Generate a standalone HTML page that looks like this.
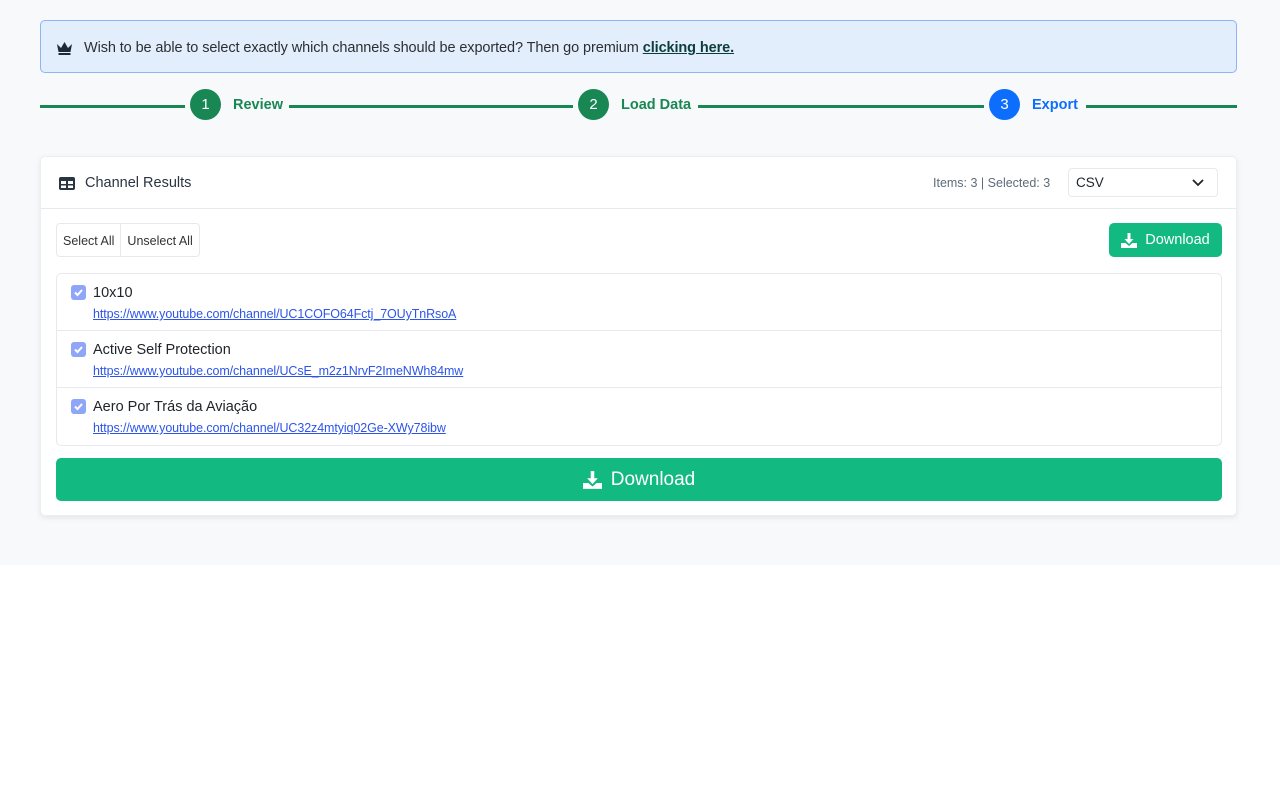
<!DOCTYPE html>
<html><head><meta charset="utf-8"><style>
*{box-sizing:border-box;margin:0;padding:0}
body{width:1280px;height:800px;background:#fff;font-family:"Liberation Sans",sans-serif;color:#212529;font-size:14px}
.bg{position:absolute;left:0;top:0;width:1280px;height:565px;background:#f8f9fb}
.alert{position:absolute;left:40px;top:20px;width:1197px;height:53px;background:#e3eefc;border:1px solid #8db4f6;border-radius:5px;display:flex;align-items:center;padding-left:15px;padding-top:3px;font-size:14.5px;color:#2b2f33;letter-spacing:-0.1px}
.alert a{color:#0b3d3a;font-weight:bold;text-decoration:underline;margin-left:4px}
.line{position:absolute;top:105px;height:3px;background:#198754}
.circ{position:absolute;top:89px;width:31px;height:31px;border-radius:50%;background:#198754;color:#fff;font-size:15px;display:flex;align-items:center;justify-content:center}
.lbl{position:absolute;top:97px;font-weight:bold;font-size:14.5px;color:#198754}
.card{position:absolute;left:40px;top:156px;width:1197px;height:360px;background:#fff;border:1px solid #eceef1;border-radius:5px;box-shadow:0 2px 6px rgba(0,0,0,.08)}
.hdr{height:52px;border-bottom:1px solid #e6e9ee;position:relative}
.btn{position:absolute;background:#12b981;color:#fff;border-radius:5px;display:flex;align-items:center;justify-content:center}
.list{position:absolute;left:15px;top:116px;width:1166px;border:1px solid #e6e9ee;border-radius:5px}
.row{height:57px;border-bottom:1px solid #e6e9ee;position:relative}
.row:last-child{border-bottom:none}
.cb{position:absolute;left:14px;top:11px;width:15px;height:15px;border-radius:3px;background:#8fa6f8}
.nm{position:absolute;left:36px;top:11px;font-size:14.5px}
.url{position:absolute;left:36px;top:33px;font-size:12.5px;color:#2d55e8;text-decoration:underline;letter-spacing:-0.1px}
</style></head><body>
<div class="bg"></div>
<div class="alert"><svg width="17" height="14" viewBox="0 0 17 14" style="margin-right:11px"><path d="M1 3l4 4 3.5-6 3.5 6 4-4-1.5 8h-12z M2.5 12h12v2h-12z" fill="#1e2a3a"/></svg>Wish to be able to select exactly which channels should be exported? Then go premium <a>clicking here.</a></div>
<div class="line" style="left:40px;width:145px"></div>
<div class="circ" style="left:190px">1</div><div class="lbl" style="left:233px">Review</div>
<div class="line" style="left:289px;width:284px"></div>
<div class="circ" style="left:578px">2</div><div class="lbl" style="left:621px">Load Data</div>
<div class="line" style="left:698px;width:286px"></div>
<div class="circ" style="left:989px;background:#0d6efd">3</div><div class="lbl" style="left:1032px;color:#0d6efd">Export</div>
<div class="line" style="left:1086px;width:151px"></div>
<div class="card">
<div class="hdr">
<svg width="16" height="13" viewBox="0 0 16 13" style="position:absolute;left:18px;top:20px"><rect x="0" y="0" width="16" height="13" rx="2" fill="#2b3441"/><rect x="2" y="4" width="5" height="3" fill="#fff"/><rect x="9" y="4" width="5" height="3" fill="#fff"/><rect x="2" y="8.5" width="5" height="2.5" fill="#fff"/><rect x="9" y="8.5" width="5" height="2.5" fill="#fff"/></svg>
<div style="position:absolute;left:44px;top:18px;font-size:14.5px;color:#2b3441">Channel Results</div>
<div style="position:absolute;left:892px;top:19px;font-size:12.5px;color:#5f6b7a">Items: 3 | Selected: 3</div>
<div style="position:absolute;left:1027px;top:11px;width:150px;height:29px;border:1px solid #e6e9ee;border-radius:4px;font-size:13.5px;padding:6px 0 0 7px">CSV<svg width="12" height="8" viewBox="0 0 12 8" style="position:absolute;right:13px;top:10px"><path d="M1 1l5 5 5-5" stroke="#222" stroke-width="1.8" fill="none"/></svg></div>
</div>
<div style="position:absolute;left:15px;top:66px;height:34px;border:1px solid #e6e9ee;border-radius:4px;display:flex;font-size:12.5px;color:#333"><div style="padding:10px 6px 0;border-right:1px solid #e6e9ee">Select All</div><div style="padding:10px 6px 0">Unselect All</div></div>
<div class="btn" style="left:1068px;top:66px;width:113px;height:34px;font-size:14.5px"><svg width="16" height="15" viewBox="0 0 16 15" style="margin-right:8px"><path d="M6.5 0h3v6h3l-4.5 5-4.5-5h3z M0 10h4.5l3.5 3 3.5-3h4.5v5h-16z" fill="#fff"/></svg>Download</div>
<div class="list">
<div class="row"><div class="cb"><svg width="15" height="15" viewBox="0 0 15 15"><path d="M4 7.5l2.5 2.5 4.5-5" stroke="#fff" stroke-width="2" fill="none"/></svg></div><div class="nm">10x10</div><div class="url">https://www.youtube.com/channel/UC1COFO64Fctj_7OUyTnRsoA</div></div>
<div class="row"><div class="cb"><svg width="15" height="15" viewBox="0 0 15 15"><path d="M4 7.5l2.5 2.5 4.5-5" stroke="#fff" stroke-width="2" fill="none"/></svg></div><div class="nm">Active Self Protection</div><div class="url">https://www.youtube.com/channel/UCsE_m2z1NrvF2ImeNWh84mw</div></div>
<div class="row"><div class="cb"><svg width="15" height="15" viewBox="0 0 15 15"><path d="M4 7.5l2.5 2.5 4.5-5" stroke="#fff" stroke-width="2" fill="none"/></svg></div><div class="nm">Aero Por Trás da Aviação</div><div class="url">https://www.youtube.com/channel/UC32z4mtyiq02Ge-XWy78ibw</div></div>
</div>
<div class="btn" style="left:15px;top:301px;width:1166px;height:43px;font-size:19px"><svg width="19" height="18" viewBox="0 0 16 15" style="margin-right:9px"><path d="M6.5 0h3v6h3l-4.5 5-4.5-5h3z M0 10h4.5l3.5 3 3.5-3h4.5v5h-16z" fill="#fff"/></svg>Download</div>
</div>
</body></html>
